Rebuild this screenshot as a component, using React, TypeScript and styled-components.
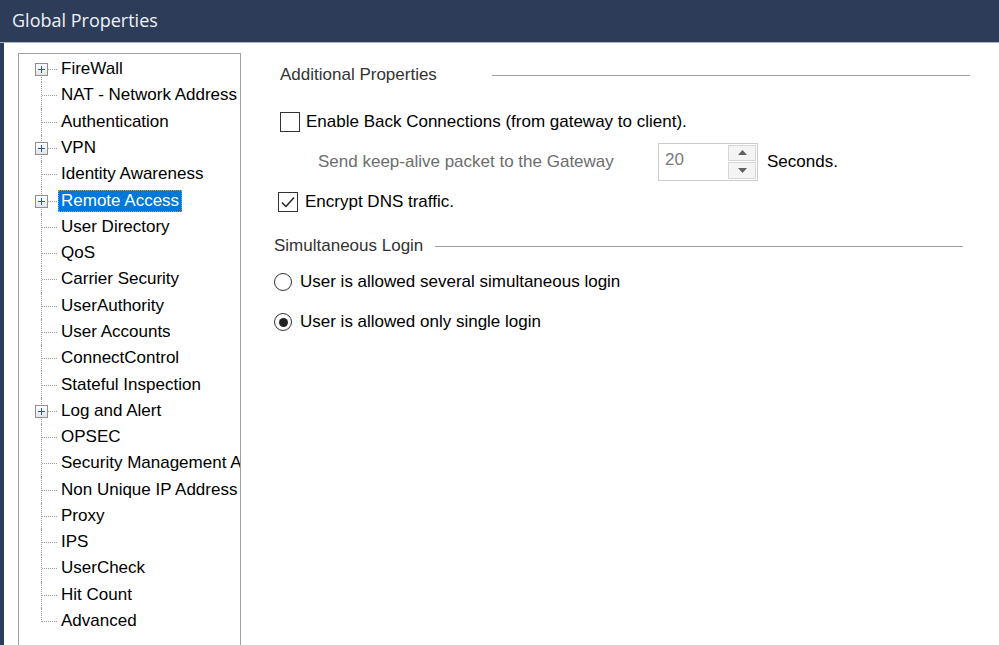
import React from 'react';
import styled, { createGlobalStyle } from 'styled-components';

const Global = createGlobalStyle`
  html, body { margin: 0; padding: 0; background: #fff; }
  body { font-family: "Liberation Sans", Arial, sans-serif; }
  #root { width: 999px; height: 645px; overflow: hidden; }
`;

const Window = styled.div`
  width: 999px;
  height: 645px;
  display: flex;
  flex-direction: column;
  background: #fff;
  overflow: hidden;
`;

const TitleBar = styled.div`
  flex: none;
  height: 43px;
  box-sizing: border-box;
  background: #2d3c58;
  border-bottom: 1px solid #a9b5c7;
  display: flex;
  align-items: center;
  padding: 0 0 2px 12px;
  color: #eef2f8;
  font-family: "Segoe UI", "Open Sans", "Noto Sans", sans-serif;
  font-size: 18px;
`;

const Body = styled.div`
  flex: 1;
  display: flex;
  border-left: 4px solid #2d3c58;
  min-height: 0;
`;

const TreePanel = styled.div`
  flex: none;
  margin: 10px 0 0 14px;
  width: 223px;
  height: 640px;
  box-sizing: border-box;
  border: 1px solid #a0a0a0;
  padding-top: 2px;
  overflow: hidden;
`;

const Row = styled.div`
  height: 26.29px;
  display: flex;
  align-items: center;
`;

const Connector = styled.div<{ $first?: boolean; $last?: boolean }>`
  flex: none;
  width: 39px;
  align-self: stretch;
  position: relative;
  &::before {
    content: '';
    position: absolute;
    left: 22px;
    top: ${(p) => (p.$first ? '50%' : '0')};
    bottom: ${(p) => (p.$last ? 'calc(50% - 1px)' : '0')};
    border-left: 1px dotted #9a9a9a;
  }
  &::after {
    content: '';
    position: absolute;
    left: 23px;
    right: 1px;
    top: 50%;
    border-top: 1px dotted #9a9a9a;
  }
`;

const Expander = styled.span`
  position: absolute;
  z-index: 1;
  left: 16px;
  top: calc(50% - 6px);
  width: 11px;
  height: 11px;
  border: 1px solid #8e8f8f;
  background: linear-gradient(#ffffff, #e4e4e4);
  display: flex;
  align-items: center;
  justify-content: center;
`;

const Label = styled.span<{ $selected?: boolean }>`
  font-size: 17px;
  line-height: 22px;
  padding: 0 3px;
  white-space: nowrap;
  color: ${(p) => (p.$selected ? '#fff' : '#000')};
  background: ${(p) => (p.$selected ? '#0078d7' : 'transparent')};
  outline: ${(p) => (p.$selected ? '1px dotted #e09030' : 'none')};
  outline-offset: -1px;
`;

const Content = styled.div`
  flex: 1;
  display: flex;
  flex-direction: column;
  padding: 22px 0 0 33px;
  font-size: 17px;
  color: #000;
`;

const SectionHeader = styled.div<{ $indent: number; $gap: number; $right: number; $top?: number }>`
  height: 20px;
  display: flex;
  align-items: center;
  margin-top: ${(p) => p.$top ?? 0}px;
  margin-left: ${(p) => p.$indent}px;
  margin-right: ${(p) => p.$right}px;
  color: #333;
  gap: ${(p) => p.$gap}px;
`;

const Rule = styled.div`
  flex: 1;
  border-top: 1px solid #a0a0a0;
  margin-top: 1px;
`;

const OptionRow = styled.div<{ $top: number; $indent?: number; $h?: number }>`
  height: ${(p) => p.$h ?? 22}px;
  margin-top: ${(p) => p.$top}px;
  margin-left: ${(p) => p.$indent ?? 0}px;
  display: flex;
  align-items: center;
  white-space: nowrap;
`;

const CheckBox = styled.span<{ $mr: number }>`
  flex: none;
  width: 18px;
  height: 18px;
  border: 1px solid #333;
  background: #fff;
  margin-right: ${(p) => p.$mr}px;
  display: flex;
  align-items: center;
  justify-content: center;
`;

const Radio = styled.span<{ $on?: boolean }>`
  flex: none;
  width: 16px;
  height: 16px;
  border: 1px solid #333;
  border-radius: 50%;
  background: #fff;
  margin-right: 8px;
  display: flex;
  align-items: center;
  justify-content: center;
  &::after {
    content: '';
    width: 9px;
    height: 9px;
    border-radius: 50%;
    background: ${(p) => (p.$on ? '#222' : 'transparent')};
  }
`;

const DisabledText = styled.span`
  color: #6d6d6d;
  width: 340px;
  flex: none;
`;

const Spin = styled.div`
  flex: none;
  width: 100px;
  height: 38px;
  box-sizing: border-box;
  border: 1px solid #cccccc;
  display: flex;
  margin-right: 9px;
  background: #fff;
`;

const SpinValue = styled.div`
  flex: 1;
  color: #7a7a7a;
  padding: 6px 0 0 6px;
  font-size: 17px;
`;

const SpinButtons = styled.div`
  width: 28px;
  display: flex;
  flex-direction: column;
  gap: 1px;
  padding: 1px 1px 1px 0;
`;

const SpinButton = styled.div`
  flex: 1;
  border: 1px solid #d6d6d6;
  background: #f4f4f4;
  display: flex;
  align-items: center;
  justify-content: center;
`;

const items: { label: string; exp?: boolean; sel?: boolean }[] = [
  { label: 'FireWall', exp: true },
  { label: 'NAT - Network Address Translation' },
  { label: 'Authentication' },
  { label: 'VPN', exp: true },
  { label: 'Identity Awareness' },
  { label: 'Remote Access', exp: true, sel: true },
  { label: 'User Directory' },
  { label: 'QoS' },
  { label: 'Carrier Security' },
  { label: 'UserAuthority' },
  { label: 'User Accounts' },
  { label: 'ConnectControl' },
  { label: 'Stateful Inspection' },
  { label: 'Log and Alert', exp: true },
  { label: 'OPSEC' },
  { label: 'Security Management Access' },
  { label: 'Non Unique IP Address Ranges' },
  { label: 'Proxy' },
  { label: 'IPS' },
  { label: 'UserCheck' },
  { label: 'Hit Count' },
  { label: 'Advanced' },
];

const Plus = () => (
  <svg width="9" height="9" viewBox="0 0 9 9" shapeRendering="crispEdges">
    <rect x="1" y="4" width="7" height="1.4" fill="#2a5aa8" />
    <rect x="3.8" y="1" width="1.4" height="7" fill="#2a5aa8" />
  </svg>
);

const Check = () => (
  <svg width="18" height="18" viewBox="0 0 18 18">
    <polyline points="3,9.5 7,13.5 15,4.5" fill="none" stroke="#222" strokeWidth="1.5" />
  </svg>
);

const Arrow = ({ up }: { up?: boolean }) => (
  <svg width="9" height="5" viewBox="0 0 9 5">
    <polygon points={up ? '0,5 9,5 4.5,0' : '0,0 9,0 4.5,5'} fill="#606060" />
  </svg>
);

export default function App() {
  return (
    <Window>
      <Global />
      <TitleBar>Global Properties</TitleBar>
      <Body>
        <TreePanel>
          {items.map((it, i) => (
            <Row key={it.label}>
              <Connector $first={i === 0} $last={i === items.length - 1}>
                {it.exp && (
                  <Expander>
                    <Plus />
                  </Expander>
                )}
              </Connector>
              <Label $selected={it.sel}>{it.label}</Label>
            </Row>
          ))}
        </TreePanel>
        <Content>
          <SectionHeader $indent={6} $gap={55} $right={29}>
            Additional Properties
            <Rule />
          </SectionHeader>
          <OptionRow $top={26} $indent={6}>
            <CheckBox $mr={6} />
            Enable Back Connections (from gateway to client).
          </OptionRow>
          <OptionRow $top={10} $indent={44} $h={37}>
            <DisabledText>Send keep-alive packet to the Gateway</DisabledText>
            <Spin>
              <SpinValue>20</SpinValue>
              <SpinButtons>
                <SpinButton>
                  <Arrow up />
                </SpinButton>
                <SpinButton>
                  <Arrow />
                </SpinButton>
              </SpinButtons>
            </Spin>
            Seconds.
          </OptionRow>
          <OptionRow $top={11} $indent={4}>
            <CheckBox $mr={7}>
              <Check />
            </CheckBox>
            Encrypt DNS traffic.
          </OptionRow>
          <SectionHeader $indent={0} $gap={12} $right={36} $top={23}>
            Simultaneous Login
            <Rule />
          </SectionHeader>
          <OptionRow $top={15}>
            <Radio />
            User is allowed several simultaneous login
          </OptionRow>
          <OptionRow $top={18}>
            <Radio $on />
            User is allowed only single login
          </OptionRow>
        </Content>
      </Body>
    </Window>
  );
}
